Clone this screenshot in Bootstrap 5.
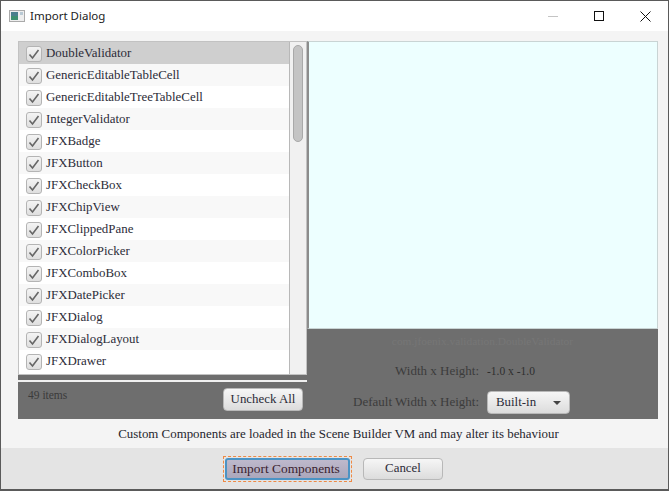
<!DOCTYPE html>
<html lang="en">
<head>
<meta charset="utf-8">
<title>Import Dialog</title>
<link href="https://cdn.jsdelivr.net/npm/bootstrap@5.3.0/dist/css/bootstrap.min.css" rel="stylesheet">
<style>
html,body{height:100%;}
body{background:#fff;font-family:"Liberation Serif",serif;font-size:12.9px;color:#2e2a33;overflow:hidden;}
.win{width:669px;height:491px;border:1px solid #5a5a5a;border-bottom-width:2px;background:#f4f4f4;}
.titlebar{height:30px;background:#fff;flex:none;}
.titletext{font-family:"Noto Sans",sans-serif;font-size:11.5px;color:#222;margin-left:5px;}
.appicon{margin-left:8px;}
.winbtns{margin-left:auto;}
.winbtn{width:46px;height:30px;}
.content{padding:10px 10px 0 17px;flex:1 1 auto;min-height:0;}
.panel{background:#6e6e6e;height:378px;width:640px;}
.leftcol{width:289px;flex:none;}
.listbox{height:334px;border:1px solid #c2c2c2;background:#fff;overflow:hidden;}
.rows{flex:1 1 auto;min-width:0;}
.rowitem{height:22px;padding-left:7px;padding-top:2px;gap:4px;color:#2c2c38;}
.rowitem:nth-child(odd){background:#fff;}
.rowitem:nth-child(even){background:#f8f8f8;}
.rowitem.sel{background:#cfcfcf;}
.chk{width:16px;height:16px;border:1px solid #b4b4b4;border-radius:3px;background:linear-gradient(#f4f4f4,#dfdfdf);flex:none;}
.scrolltrack{width:17px;border-left:1px solid #b8b8b8;background:#f1f1f1;flex:none;padding:3px 3px 0;}
.thumb{height:97px;background:#c4c4c4;border:1px solid #a9a9a9;border-radius:5px;}
.sepline{height:2px;background:#f0f0f0;margin-top:5px;}
.leftfoot{padding:6px 4px 0 10px;}
.countlabel{font-size:11.5px;color:#3b3b3b;margin-top:-1px;}
.fxbtn{background:linear-gradient(#f6f6f6,#dcdcdc);border:1px solid #b8b8b8;border-radius:4px;color:#2c2c38;font-size:12.9px;line-height:1;padding:0;}
.uncheck{width:80px;height:23px;}
.rightcol{flex:1 1 auto;min-width:0;}
.preview{height:288px;background:#edffff;border:1px solid #c9d4d4;border-left:2px solid #8c8c8c;}
.classname{color:#767676;font-size:11.4px;text-align:center;margin-top:5px;height:15px;line-height:15px;}
.propname{width:172px;text-align:right;color:#3c3c3c;font-size:13px;flex:none;padding-bottom:2px;}
.sizerow{margin-top:14px;height:17px;gap:8px;}
.sizeval{font-size:11.5px;color:#2e2e2e;padding-top:1px;}
.defrow{margin-top:11px;gap:8px;}
.combo{width:83px;height:23px;padding:0 8px;}
.caret{width:0;height:0;border-left:4px solid transparent;border-right:4px solid transparent;border-top:4px solid #444;}
.note{height:29px;color:#26262e;padding-left:1px;padding-top:2px;}
.btnband{background:#e4e4e4;height:41px;flex:none;gap:11px;padding-right:3px;}
.focusring{border:1px dashed #ee8a45;padding:1px;}
.importb{width:125px;height:22px;background:linear-gradient(#beb9cc,#aba7bb);border:2px solid #4b93c4;color:#3a1e2e;border-radius:3px;font-size:13.4px;padding-right:3px;}
.cancelb{width:80px;height:22px;}
</style>
</head>
<body>
<div class="win d-flex flex-column">
  <div class="titlebar d-flex align-items-center">
    <svg class="appicon" width="16" height="12" viewBox="0 0 16 12"><rect x=".5" y=".5" width="15" height="11" fill="#eee" stroke="#aaa"/><rect x="2" y="2" width="7" height="8" fill="#4a7f8c"/><rect x="2" y="6" width="7" height="4" fill="#3d8f6e"/><rect x="11" y="2" width="3" height="3" fill="#b9c9d4"/></svg>
    <span class="titletext">Import Dialog</span>
    <div class="winbtns d-flex">
      <div class="winbtn d-flex align-items-center justify-content-center"><svg width="11" height="11" viewBox="0 0 11 11"><path d="M0 5.5h10" stroke="#c4c4c4"/></svg></div>
      <div class="winbtn d-flex align-items-center justify-content-center"><svg width="11" height="11" viewBox="0 0 11 11"><rect x=".5" y=".5" width="9" height="9" fill="none" stroke="#111"/></svg></div>
      <div class="winbtn d-flex align-items-center justify-content-center"><svg width="11" height="11" viewBox="0 0 11 11"><path d="M.5.5l10 10M10.500.5l-10 10" stroke="#111" fill="none"/></svg></div>
    </div>
  </div>
  <div class="content d-flex flex-column">
    <div class="panel d-flex">
      <div class="leftcol d-flex flex-column">
        <div class="listbox d-flex">
          <div class="rows">
            <div class="rowitem sel d-flex align-items-center"><span class="chk d-flex align-items-center justify-content-center"><svg width="12" height="11" viewBox="0 0 12 11"><path d="M1.500 5.500l3 3.500 6-8" fill="none" stroke="#666" stroke-width="1.600"/></svg></span>DoubleValidator</div>
            <div class="rowitem d-flex align-items-center"><span class="chk d-flex align-items-center justify-content-center"><svg width="12" height="11" viewBox="0 0 12 11"><path d="M1.500 5.500l3 3.500 6-8" fill="none" stroke="#666" stroke-width="1.600"/></svg></span>GenericEditableTableCell</div>
            <div class="rowitem d-flex align-items-center"><span class="chk d-flex align-items-center justify-content-center"><svg width="12" height="11" viewBox="0 0 12 11"><path d="M1.500 5.500l3 3.500 6-8" fill="none" stroke="#666" stroke-width="1.600"/></svg></span>GenericEditableTreeTableCell</div>
            <div class="rowitem d-flex align-items-center"><span class="chk d-flex align-items-center justify-content-center"><svg width="12" height="11" viewBox="0 0 12 11"><path d="M1.500 5.500l3 3.500 6-8" fill="none" stroke="#666" stroke-width="1.600"/></svg></span>IntegerValidator</div>
            <div class="rowitem d-flex align-items-center"><span class="chk d-flex align-items-center justify-content-center"><svg width="12" height="11" viewBox="0 0 12 11"><path d="M1.500 5.500l3 3.500 6-8" fill="none" stroke="#666" stroke-width="1.600"/></svg></span>JFXBadge</div>
            <div class="rowitem d-flex align-items-center"><span class="chk d-flex align-items-center justify-content-center"><svg width="12" height="11" viewBox="0 0 12 11"><path d="M1.500 5.500l3 3.500 6-8" fill="none" stroke="#666" stroke-width="1.600"/></svg></span>JFXButton</div>
            <div class="rowitem d-flex align-items-center"><span class="chk d-flex align-items-center justify-content-center"><svg width="12" height="11" viewBox="0 0 12 11"><path d="M1.500 5.500l3 3.500 6-8" fill="none" stroke="#666" stroke-width="1.600"/></svg></span>JFXCheckBox</div>
            <div class="rowitem d-flex align-items-center"><span class="chk d-flex align-items-center justify-content-center"><svg width="12" height="11" viewBox="0 0 12 11"><path d="M1.500 5.500l3 3.500 6-8" fill="none" stroke="#666" stroke-width="1.600"/></svg></span>JFXChipView</div>
            <div class="rowitem d-flex align-items-center"><span class="chk d-flex align-items-center justify-content-center"><svg width="12" height="11" viewBox="0 0 12 11"><path d="M1.500 5.500l3 3.500 6-8" fill="none" stroke="#666" stroke-width="1.600"/></svg></span>JFXClippedPane</div>
            <div class="rowitem d-flex align-items-center"><span class="chk d-flex align-items-center justify-content-center"><svg width="12" height="11" viewBox="0 0 12 11"><path d="M1.500 5.500l3 3.500 6-8" fill="none" stroke="#666" stroke-width="1.600"/></svg></span>JFXColorPicker</div>
            <div class="rowitem d-flex align-items-center"><span class="chk d-flex align-items-center justify-content-center"><svg width="12" height="11" viewBox="0 0 12 11"><path d="M1.500 5.500l3 3.500 6-8" fill="none" stroke="#666" stroke-width="1.600"/></svg></span>JFXComboBox</div>
            <div class="rowitem d-flex align-items-center"><span class="chk d-flex align-items-center justify-content-center"><svg width="12" height="11" viewBox="0 0 12 11"><path d="M1.500 5.500l3 3.500 6-8" fill="none" stroke="#666" stroke-width="1.600"/></svg></span>JFXDatePicker</div>
            <div class="rowitem d-flex align-items-center"><span class="chk d-flex align-items-center justify-content-center"><svg width="12" height="11" viewBox="0 0 12 11"><path d="M1.500 5.500l3 3.500 6-8" fill="none" stroke="#666" stroke-width="1.600"/></svg></span>JFXDialog</div>
            <div class="rowitem d-flex align-items-center"><span class="chk d-flex align-items-center justify-content-center"><svg width="12" height="11" viewBox="0 0 12 11"><path d="M1.500 5.500l3 3.500 6-8" fill="none" stroke="#666" stroke-width="1.600"/></svg></span>JFXDialogLayout</div>
            <div class="rowitem d-flex align-items-center"><span class="chk d-flex align-items-center justify-content-center"><svg width="12" height="11" viewBox="0 0 12 11"><path d="M1.500 5.500l3 3.500 6-8" fill="none" stroke="#666" stroke-width="1.600"/></svg></span>JFXDrawer</div>
          </div>
          <div class="scrolltrack"><div class="thumb"></div></div>
        </div>
        <div class="sepline"></div>
        <div class="leftfoot d-flex justify-content-between align-items-start">
          <span class="countlabel">49 items</span>
          <button class="fxbtn uncheck" type="button">Uncheck All</button>
        </div>
      </div>
      <div class="rightcol d-flex flex-column">
        <div class="preview"></div>
        <div class="classname">com.jfoenix.validation.DoubleValidator</div>
        <div class="sizerow d-flex align-items-center"><span class="propname">Width x Height:</span><span class="sizeval">-1.0 x -1.0</span></div>
        <div class="defrow d-flex align-items-center"><span class="propname">Default Width x Height:</span><button class="fxbtn combo d-flex align-items-center justify-content-between" type="button"><span>Built-in</span><span class="caret"></span></button></div>
      </div>
    </div>
    <div class="note d-flex align-items-center justify-content-center">Custom Components are loaded in the Scene Builder VM and may alter its behaviour</div>
  </div>
  <div class="btnband d-flex align-items-center justify-content-center">
    <span class="focusring"><button class="fxbtn importb d-block" type="button">Import Components</button></span>
    <button class="fxbtn cancelb" type="button">Cancel</button>
  </div>
</div>
</body>
</html>
